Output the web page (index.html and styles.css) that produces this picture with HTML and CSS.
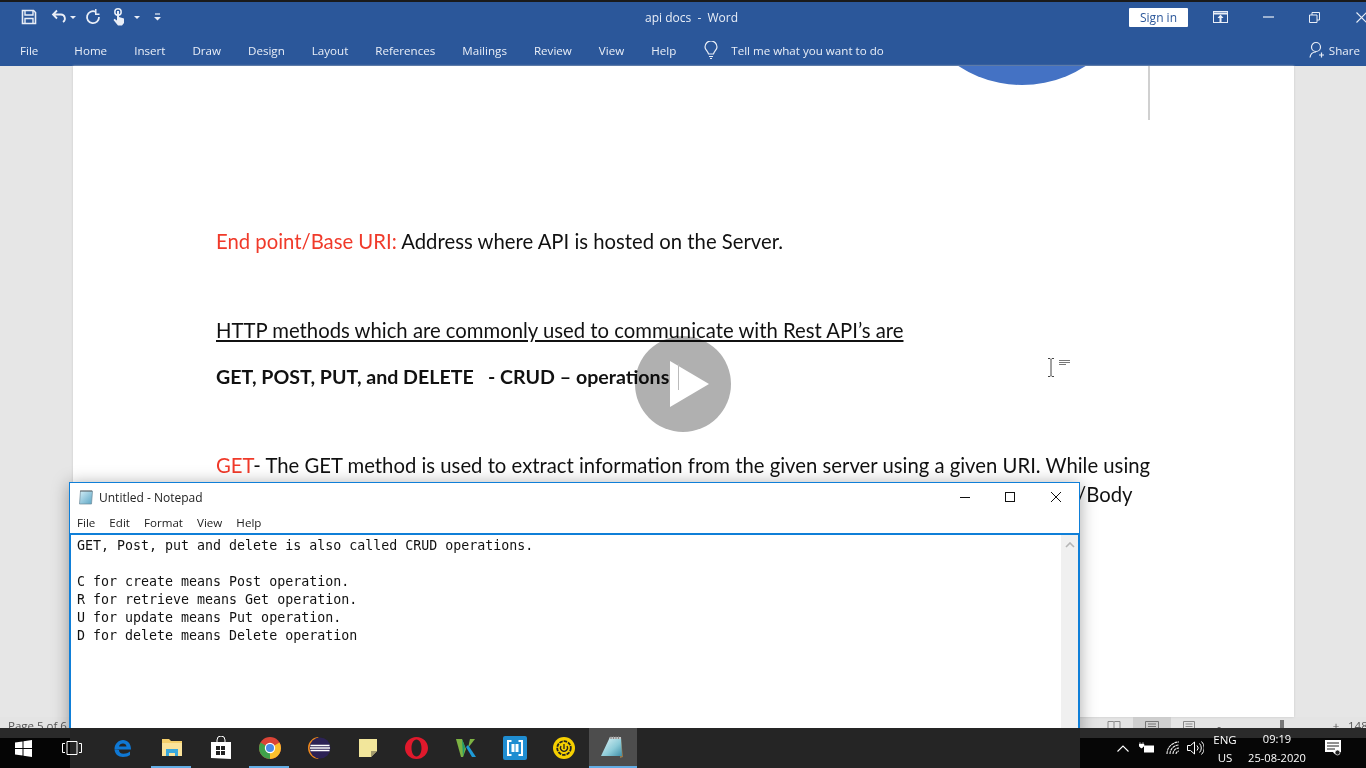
FILE: index.html
```html
<!DOCTYPE html>
<html lang="en">
<head>
    <meta charset="UTF-8">
    <title>api docs - Word</title>
    <link rel="stylesheet" href="styles.css">
</head>
<body>
    <div class="word">
        <header class="titlebar">
            <div class="qat">
                <svg class="qat-save" width="16" height="16" viewBox="0 0 16 16"><path d="M1.500 1.500h11l2 2v11h-13z" fill="none" stroke="#e9eef7" stroke-width="1.600"/><path d="M4 2v4h8V2M4 14.500V9.500h8v5" fill="none" stroke="#e9eef7" stroke-width="1.400"/></svg>
                <svg class="qat-undo" width="16" height="16" viewBox="0 0 16 16"><path d="M6 1.500 2 5.500l4 4M2.500 5.500H10a4 4 0 0 1 2 7.400" fill="none" stroke="#e9eef7" stroke-width="1.800"/></svg>
                <span class="qat-drop"></span>
                <svg class="qat-redo" width="16" height="16" viewBox="0 0 16 16"><path d="M10.600 2.800A6 6 0 1 0 14 8" fill="none" stroke="#e9eef7" stroke-width="1.800"/><path d="M10 0v6h4.500V4.500h-3V0z" fill="#e9eef7"/></svg>
                <svg class="qat-touch" width="14" height="18" viewBox="0 0 14 18"><circle cx="6" cy="4" r="3.200" fill="none" stroke="#e9eef7" stroke-width="1.500"/><path d="M5 3h2v6l5 1.500V15l-2 2.500H6L1.500 12l1-1.200L5 12.500z" fill="#e9eef7"/></svg>
                <span class="qat-drop qat-drop-touch"></span>
                <svg class="qat-more" width="7" height="8" viewBox="0 0 7 8"><path d="M1 1h5" stroke="#e9eef7" stroke-width="1.200"/><path d="M0 4h7L3.500 7.500z" fill="#e9eef7"/></svg>
            </div>
            <div class="doc-title">api docs&nbsp; -&nbsp; Word</div>
            <div class="win-controls">
                <button class="signin">Sign in</button>
                <svg class="ctl-display" width="15" height="12" viewBox="0 0 15 12"><rect x=".5" y=".5" width="14" height="11" fill="none" stroke="#e9eef7"/><path d="M.5 2.500h14" stroke="#e9eef7" stroke-width="2"/><path d="M7.500 3.500 4.500 7h2v4h2V7h2z" fill="#e9eef7"/></svg>
                <svg class="ctl-min" width="11" height="2" viewBox="0 0 11 2"><path d="M0 1h11" stroke="#e9eef7" stroke-width="1.200"/></svg>
                <svg class="ctl-restore" width="11" height="11" viewBox="0 0 11 11"><path d="M.5 3h7.500v7.500H.5zM3 3V.5h7.500V8H8" fill="none" stroke="#e9eef7"/></svg>
                <svg class="ctl-close" width="11" height="11" viewBox="0 0 11 11"><path d="M.5.500l10 10M10.500.500l-10 10" stroke="#e9eef7" stroke-width="1.100"/></svg>
            </div>
        </header>
        <nav class="ribbon">
            <span class="tab tab-file">File</span>
            <span class="tab">Home</span>
            <span class="tab">Insert</span>
            <span class="tab">Draw</span>
            <span class="tab">Design</span>
            <span class="tab">Layout</span>
            <span class="tab">References</span>
            <span class="tab">Mailings</span>
            <span class="tab">Review</span>
            <span class="tab">View</span>
            <span class="tab">Help</span>
            <svg class="bulb" width="14" height="18" viewBox="0 0 14 18"><path d="M4.500 13C4 10 1 9 1 6a6 6 0 0 1 12 0c0 3-3 4-3.500 7zM5 15.500h4M6 17.500h2" fill="none" stroke="#e9eef7" stroke-width="1.200"/></svg>
            <span class="tell">Tell me what you want to do</span>
            <span class="share">
                <svg width="16" height="18" viewBox="0 0 16 18"><circle cx="7" cy="6" r="4.500" fill="none" stroke="#e9eef7" stroke-width="1.200"/><path d="M1 16.500C1.500 12.500 4 11 7 11M12.500 11.500v5M10 14h5" fill="none" stroke="#e9eef7" stroke-width="1.200"/></svg>
                Share
            </span>
        </nav>
        <main class="workspace">
            <article class="page">
                <div class="shape-circle"></div>
                <div class="margin-line"></div>
                <p class="line line-endpoint"><span class="red">End point/Base URI:</span> Address where API is hosted on the Server.</p>
                <p class="line line-http"><u>HTTP methods which are commonly used to communicate with Rest API’s are</u></p>
                <p class="line line-crud"><b>GET, POST, PUT, and DELETE &nbsp; - CRUD – operations</b><span class="mark">.</span></p>
                <p class="line line-get"><span class="red">GET</span>- The GET method is used to extract information from the given server using a given URI. While using</p>
                <p class="line line-body">/Body</p>
                <svg class="ibeam" width="22" height="20" viewBox="0 0 22 20"><path d="M1 .5h2l1 1 1-1h2M4 1.500v16M1 18.500h2l1-1 1 1h2" fill="none" stroke="#444" stroke-width="1"/><path d="M12 2.500h11M12 4.500h11M12 6.500h7" stroke="#777" stroke-width="1"/></svg>
            </article>
        </main>
        <footer class="statusbar">
            <span class="page-count">Page 5 of 6</span>
            <div class="view-btns">
                <svg width="14" height="11" viewBox="0 0 14 11"><path d="M1 .5h5.500l.5 1 .5-1H13V11H1zM7 1.500V11" fill="none" stroke="#8a8a8a"/></svg>
                <span class="view-active"><svg width="14" height="11" viewBox="0 0 14 11"><path d="M.5.500h13V11H.5zM3 3h8M3 5.500h8M3 8h8" fill="none" stroke="#777"/></svg></span>
                <svg width="14" height="11" viewBox="0 0 14 11"><path d="M.5.500h11V11H.5zM2.500 3h7M2.500 5.500h7M2.500 8h7" fill="none" stroke="#8a8a8a"/></svg>
            </div>
            <span class="zoom-step zoom-minus">-</span>
            <span class="zoom-thumb"></span>
            <span class="zoom-step zoom-plus">+</span>
            <span class="zoom-val">148</span>
        </footer>
    </div>

    <div class="play">
        <div class="play-disc"></div>
        <div class="play-arrow"></div>
        <div class="play-caret"></div>
    </div>

    <section class="notepad">
        <div class="np-title">
            <svg class="np-icon" width="16" height="16" viewBox="0 0 16 16"><defs><linearGradient id="npg" x1="0" y1="0" x2="1" y2="1"><stop offset="0" stop-color="#d4eef7"/><stop offset="1" stop-color="#5ba5c4"/></linearGradient></defs><path d="M2.500 2h12L13.500 15h-12z" fill="url(#npg)" stroke="#6f8a99" stroke-width=".7"/><path d="M3 1v2M5 1v2M7 1v2M9 1v2M11 1v2M13 1v2" stroke="#555" stroke-width=".8"/></svg>
            <span class="np-name">Untitled - Notepad</span>
            <div class="np-controls">
                <svg width="10" height="1" viewBox="0 0 10 1"><path d="M0 .5h10" stroke="#111"/></svg>
                <svg width="10" height="10" viewBox="0 0 10 10"><rect x=".5" y=".5" width="9" height="9" fill="none" stroke="#111"/></svg>
                <svg class="np-close" width="10" height="10" viewBox="0 0 10 10"><path d="M0 0l10 10M10 0 0 10" stroke="#111"/></svg>
            </div>
        </div>
        <div class="np-menu">
            <span>File</span><span>Edit</span><span>Format</span><span>View</span><span>Help</span>
        </div>
        <div class="np-body">
            <pre class="np-text">GET, Post, put and delete is also called CRUD operations.

C for create means Post operation.
R for retrieve means Get operation.
U for update means Put operation.
D for delete means Delete operation</pre>
            <div class="np-scroll">
                <svg width="10" height="6" viewBox="0 0 10 6"><path d="M1 5l4-4 4 4" fill="none" stroke="#b5b5b5" stroke-width="1.600"/></svg>
            </div>
        </div>
    </section>

    <div class="taskbar">
        <div class="start-zone">
            <svg class="start" width="17" height="17" viewBox="0 0 17 17"><path d="M0 2.500 7.500 1.400V8H0zM8.500 1.300 17 0v8H8.500zM0 9h7.500v6.600L0 14.500zM8.500 9H17v8l-8.500-1.300z" fill="#fff"/></svg>
            <svg class="taskview" width="20" height="14" viewBox="0 0 20 14"><path d="M5 .5h10v13H5zM3 2.500H.5v9H3M17 2.500h2.500v9H17" fill="none" stroke="#fff"/></svg>
        </div>
        <div class="apps">
            <span class="app"><svg width="22" height="22" viewBox="0 0 22 22"><path d="M2.500 12.500H19C19 6.500 15.500 3 11 3S2.500 7 2.500 12c0 5 4 8 8.500 8 3 0 5.500-.8 7-2v-3.500c-2 1.500-4 2.200-6.500 2.200-3 0-4.500-1.500-4.500-3.700zM7 9.500c.3-2 2-3 4-3s3.300 1 3.500 3z" fill="#0f78d4" fill-rule="evenodd"/></svg></span>
            <span class="app app-open"><svg width="22" height="20" viewBox="0 0 22 20"><path d="M1 1h7l2 2h11v15H1z" fill="#f5cf6b"/><path d="M1 5h20v13H1z" fill="#fbe39a"/><path d="M5 11h12v7h-3v-3H8v3H5z" fill="#3aa8dc"/></svg></span>
            <span class="app"><svg width="22" height="24" viewBox="0 0 22 24"><path d="M7 6V4a4 4 0 0 1 8 0v2" fill="none" stroke="#fff" stroke-width="1"/><path d="M1 6h20v17L1 22z" fill="#fff"/><path d="M6 10h4v4H6zM11 10h4v4h-4zM6 15h4v4H6zM11 15h4v4h-4z" fill="#222"/></svg></span>
            <span class="app app-open"><svg width="22" height="22" viewBox="0 0 22 22"><circle cx="11" cy="11" r="11" fill="#db4437"/><path d="M11 11 20.500 5.500A11 11 0 0 1 11 22z" fill="#fbc02d"/><path d="M11 11 11 22A11 11 0 0 1 1.500 5.500z" fill="#3fa14a"/><circle cx="11" cy="11" r="5.200" fill="#fff"/><circle cx="11" cy="11" r="4" fill="#4a8be8"/></svg></span>
            <span class="app"><svg width="24" height="22" viewBox="0 0 24 22"><path d="M12 0A11 11 0 0 0 12 22 12.500 12.500 0 0 1 12 0z" fill="#f08a1c"/><circle cx="13" cy="11" r="10.500" fill="#2c2255"/><path d="M3.500 8.500h19M3 11h20M3.500 13.500h19" stroke="#fff" stroke-width="1.300"/></svg></span>
            <span class="app"><svg width="18" height="18" viewBox="0 0 18 18"><path d="M0 0h18v12l-6 6H0z" fill="#f2e69b"/><path d="M18 12h-6v6z" fill="#a39a6c"/></svg></span>
            <span class="app"><svg width="23" height="22" viewBox="0 0 23 22"><path d="M11.500 0C5 0 0 5 0 11s5 11 11.500 11S23 17 23 11 18 0 11.500 0zm0 2.500c3 0 5 3.800 5 8.500s-2 8.500-5 8.500-5-3.800-5-8.500 2-8.500 5-8.500z" fill="#e0192c" fill-rule="evenodd"/></svg></span>
            <span class="app"><svg width="20" height="20" viewBox="0 0 20 20"><path d="M0 1h6l4 10-3 8H5z" fill="#7db343"/><path d="M14 1h5l-7 9z" fill="#7db343"/><path d="M6 1 9 9 7 19z" fill="#1f9a6b"/><path d="M10 9l6 10h4L12 7z" fill="#1e9ad6"/></svg></span>
            <span class="app"><svg width="24" height="24" viewBox="0 0 24 24"><rect width="24" height="24" rx="2" fill="#1f8dd1"/><path d="M8.500 5H5v14h3.500M15.500 5H19v14h-3.500" fill="none" stroke="#fff" stroke-width="2"/><rect x="8.500" y="8" width="7" height="8" fill="#fff"/><path d="M12 4v16" stroke="#1f8dd1" stroke-width="1"/></svg></span>
            <span class="app"><svg width="22" height="22" viewBox="0 0 22 22"><circle cx="11" cy="11" r="11" fill="#f6d000"/><circle cx="11" cy="11" r="6.800" fill="none" stroke="#222" stroke-width="1.800" stroke-dasharray="3.500 1"/><path d="M8 9a3.500 3.500 0 1 0 6 0M11 7v5" fill="none" stroke="#222" stroke-width="1.300"/></svg></span>
            <span class="app app-active"><svg width="24" height="24" viewBox="0 0 24 24"><defs><linearGradient id="tbn" x1="0" y1="0" x2="1" y2="1"><stop offset="0" stop-color="#e6f6f8"/><stop offset=".6" stop-color="#8ccbd8"/><stop offset="1" stop-color="#3f8ea8"/></linearGradient></defs><path d="M20 3l2 18-3 1z" fill="#9a7a4a"/><path d="M9 1h11l1 19H0z" fill="url(#tbn)"/><path d="M9 1h11v2H8z" fill="#c4c4c4"/><path d="M10 0v3M12.500 0v3M15 0v3M17.500 0v3" stroke="#777" stroke-width=".8"/></svg></span>
        </div>
        <div class="tray">
            <svg class="tray-up" width="12" height="7" viewBox="0 0 12 7"><path d="M.5 6.500 6 1l5.500 5.500" fill="none" stroke="#fff" stroke-width="1.100"/></svg>
            <svg class="tray-batt" width="16" height="12" viewBox="0 0 16 12"><path d="M1 0v2M4 0v2M0 2h5v2L3 6H2L0 4z" fill="#fff" stroke="#fff" stroke-width=".5"/><path d="M5 3.500h10v7H5z" fill="#fff"/></svg>
            <svg class="tray-wifi" width="14" height="14" viewBox="0 0 14 14"><path d="M1 13A12 12 0 0 1 13 1M4 13a9 9 0 0 1 9-9M7 13a6 6 0 0 1 6-6M10 13a3 3 0 0 1 3-3" fill="none" stroke="#eee" stroke-width="1.100" stroke-dasharray="3 .5"/></svg>
            <svg class="tray-vol" width="17" height="14" viewBox="0 0 17 14"><path d="M.5 4.500h3l4-3.500v12l-4-3.500h-3zM10 4.500a3.500 3.500 0 0 1 0 5M12.500 2.500a6.500 6.500 0 0 1 0 9M14.500.5a9 9 0 0 1 0 13" fill="none" stroke="#fff"/></svg>
            <div class="tray-lang"><span>ENG</span><span>US</span></div>
            <div class="tray-clock"><span>09:19</span><span>25-08-2020</span></div>
            <svg class="tray-note" width="16" height="16" viewBox="0 0 16 16"><path d="M0 0h16v12h-5l-1.500 2L8 12H0z" fill="#fff"/><path d="M2 3h12M2 6h12M2 9h8" stroke="#222"/><circle cx="12.500" cy="12.500" r="2.500" fill="#222" stroke="#fff" stroke-width=".7"/></svg>
        </div>
    </div>
</body>
</html>
```

FILE: styles.css
```css
html, body {
    margin: 0;
    padding: 0;
    height: 100%;
}
body {
    position: relative;
    width: 1366px;
    height: 768px;
    overflow: hidden;
    background-color: #e6e6e6;
    font-family: "Open Sans", "Noto Sans", sans-serif;
}
svg {
    display: block;
    flex: none;
}

/* word window */
.word {
    display: flex;
    flex-direction: column;
    height: 728px;
}
.titlebar {
    display: flex;
    align-items: center;
    height: 32px;
    margin-top: 2px;
    padding-bottom: 2px;
    box-sizing: border-box;
    background-color: #2b579a;
    color: #e9eef7;
    font-size: 12px;
    position: relative;
}
.titlebar::before {
    content: "";
    position: absolute;
    left: 0;
    right: 0;
    top: -2px;
    height: 2px;
    background-color: #1a1a1a;
}
.qat {
    display: flex;
    align-items: center;
    flex: none;
    width: 645px;
    padding-left: 21px;
    box-sizing: border-box;
}
.qat-undo {
    margin-left: 14px;
}
.qat-drop {
    width: 0;
    height: 0;
    margin-left: 3px;
    border-left: 3px solid transparent;
    border-right: 3px solid transparent;
    border-top: 3px solid #e9eef7;
}
.qat-redo {
    margin-left: 9px;
}
.qat-touch {
    margin-left: 11px;
}
.qat-drop-touch {
    margin-left: 8px;
}
.qat-more {
    margin-left: 14px;
}
.doc-title {
    flex: none;
    width: 484px;
    white-space: nowrap;
}
.win-controls {
    display: flex;
    align-items: center;
    flex: none;
}
.signin {
    flex: none;
    width: 59px;
    height: 19px;
    padding: 0;
    border: 0;
    border-radius: 1px;
    background-color: #fff;
    color: #2b579a;
    font-family: inherit;
    font-size: 12px;
    line-height: 19px;
}
.ctl-display {
    margin-left: 25px;
}
.ctl-min {
    margin-left: 35px;
}
.ctl-restore {
    margin-left: 35px;
}
.ctl-close {
    margin-left: 36px;
}

.ribbon {
    display: flex;
    align-items: center;
    gap: 27px;
    height: 32px;
    padding-left: 20px;
    background-color: #2b579a;
    color: #e9eef7;
    font-size: 11.6px;
}
.tab {
    white-space: nowrap;
}
.tab-file {
    margin-right: 9px;
}
.bulb {
    margin-left: 1px;
    margin-right: -14px;
}
.tell {
    white-space: nowrap;
}
.share {
    display: flex;
    align-items: center;
    gap: 4px;
    margin-left: auto;
    margin-right: 6px;
}

/* document */
.workspace {
    flex: 1;
    padding-left: 73px;
    min-height: 0;
}
.page {
    position: relative;
    width: 1221px;
    height: 100%;
    padding-left: 143px;
    box-sizing: border-box;
    overflow: hidden;
    background-color: #fff;
    box-shadow: 0 0 2px #c8c8c8;
    font-family: Lato, "Liberation Sans", sans-serif;
    font-size: 20.3px;
    color: #111;
}
.shape-circle {
    position: absolute;
    left: 833px;
    top: -213px;
    width: 232px;
    height: 232px;
    border-radius: 50%;
    background-color: #4472c4;
}
.margin-line {
    position: absolute;
    left: 1075px;
    top: 0;
    width: 2px;
    height: 54px;
    background-color: #d0d0d0;
}
.line {
    margin: 0;
    height: 28px;
    line-height: 28px;
    white-space: nowrap;
}
.red {
    color: #f03a2a;
}
.line-endpoint {
    margin-top: 161px;
}
.line-http {
    margin-top: 61px;
}
.line-crud {
    margin-top: 18px;
}
.line-crud b {
    font-size: 19.6px;
}
.mark {
    margin-left: 1px;
    color: #aaa;
}
.line-get {
    margin-top: 61px;
}
.line-body {
    margin-top: 1px;
    padding-left: 861px;
}
.ibeam {
    position: absolute;
    left: 974px;
    top: 292px;
    overflow: visible;
}

.statusbar {
    display: flex;
    height: 11px;
    overflow: hidden;
    align-items: flex-start;
    background-color: #e4e4e4;
    color: #555;
    font-size: 11.5px;
    line-height: 18px;
    padding-left: 8px;
}
.page-count {
    width: 1099px;
    flex: none;
    white-space: nowrap;
}
.view-btns {
    display: flex;
    flex: none;
    gap: 12px;
    padding-top: 4px;
}
.view-active {
    display: block;
    width: 38px;
    height: 11px;
    margin-top: -4px;
    padding: 4px 12px 0;
    box-sizing: border-box;
    background-color: #cfcfcf;
}
.zoom-step {
    flex: none;
    width: 8px;
    text-align: center;
}
.zoom-minus {
    margin-left: 18px;
}
.zoom-thumb {
    flex: none;
    width: 4px;
    height: 8px;
    margin-left: 57px;
    margin-top: 3px;
    background-color: #777;
}
.zoom-plus {
    margin-left: 48px;
}
.zoom-val {
    flex: none;
    margin-left: 8px;
}

/* play overlay */
.play {
    position: absolute;
    left: 635px;
    top: 336px;
    width: 96px;
    height: 96px;
}
.play-disc {
    width: 96px;
    height: 96px;
    border-radius: 50%;
    background-color: #b0b0b0;
    mix-blend-mode: multiply;
}
.play-arrow {
    position: absolute;
    left: 35px;
    top: 25px;
    width: 0;
    height: 0;
    border-left: 39px solid #fff;
    border-top: 23px solid transparent;
    border-bottom: 23px solid transparent;
}
.play-caret {
    position: absolute;
    left: 43px;
    top: 28px;
    width: 1px;
    height: 26px;
    background-color: #bbb;
}

/* notepad window */
.notepad {
    position: absolute;
    left: 69px;
    top: 482px;
    width: 1011px;
    height: 260px;
    box-sizing: border-box;
    display: flex;
    flex-direction: column;
    border: 1px solid #0f7fd8;
    background-color: #fff;
    box-shadow: 0 2px 16px rgba(0, 0, 0, .35);
    font-size: 12px;
    color: #222;
}
.np-title {
    display: flex;
    align-items: center;
    height: 28px;
    padding-left: 8px;
    flex: none;
}
.np-name {
    margin-left: 5px;
    white-space: nowrap;
}
.np-controls {
    display: flex;
    align-items: center;
    gap: 35px;
    margin-left: auto;
    margin-right: 18px;
}
.np-close {
    margin-left: 1px;
}
.np-menu {
    display: flex;
    gap: 14px;
    height: 22px;
    align-items: center;
    padding-left: 7px;
    flex: none;
    font-size: 11.6px;
}
.np-body {
    display: flex;
    flex: 1;
    border-top: 2px solid #0f7fd8;
    border-left: 1px solid #0f7fd8;
    border-right: 1px solid #0f7fd8;
}
.np-text {
    flex: 1;
    margin: 0;
    padding: 2px 0 0 6px;
    font-family: "DejaVu Sans Mono", "Liberation Mono", monospace;
    font-size: 13.3px;
    line-height: 18px;
    color: #111;
}
.np-scroll {
    display: flex;
    justify-content: center;
    width: 17px;
    padding-top: 7px;
    box-sizing: border-box;
    background-color: #f0f0f0;
}

/* taskbar */
.taskbar {
    position: absolute;
    left: 0;
    right: 0;
    bottom: 0;
    height: 40px;
    display: flex;
    background-color: #252525;
    color: #fff;
    font-size: 11.5px;
}
.start-zone {
    display: flex;
    align-items: center;
    width: 98px;
    box-sizing: border-box;
    padding-left: 15px;
    background: linear-gradient(to bottom, #2a2a2a 10px, #050505 10px);
    background-size: 70px 100%;
    background-repeat: no-repeat;
}
.taskview {
    margin-left: 30px;
}
.apps {
    display: flex;
    flex: none;
    width: 539px;
}
.app {
    display: flex;
    align-items: center;
    justify-content: center;
    width: 49px;
    height: 40px;
    box-sizing: border-box;
    position: relative;
}
.app-open::after,
.app-active::after {
    content: "";
    position: absolute;
    left: 4px;
    right: 5px;
    bottom: 0;
    height: 2px;
    background-color: #63ade5;
}
.app-active {
    width: 48px;
    margin-left: 1px;
    background-color: #4d4d4d;
}
.app-active::after {
    left: 0;
    right: 0;
}
.tray {
    position: relative;
    flex: 1;
    display: flex;
    align-items: center;
    background: linear-gradient(to bottom, #2a2a2a 10px, #060606 10px) no-repeat;
    background-size: 100% 100%;
    background-position: 443px 0;
}
.tray-up {
    margin-left: 480px;
}
.tray-batt {
    margin-left: 10px;
}
.tray-wifi {
    margin-left: 11px;
}
.tray-vol {
    margin-left: 7px;
}
.tray-lang,
.tray-clock {
    display: flex;
    flex-direction: column;
    align-items: center;
    gap: 1px;
    line-height: 17px;
    white-space: nowrap;
}
.tray-lang {
    width: 24px;
    margin-left: 9px;
}
.tray-clock {
    width: 58px;
    margin-left: 11px;
    gap: 2px;
    font-size: 11.1px;
}
.tray-note {
    margin-left: 19px;
}
```
